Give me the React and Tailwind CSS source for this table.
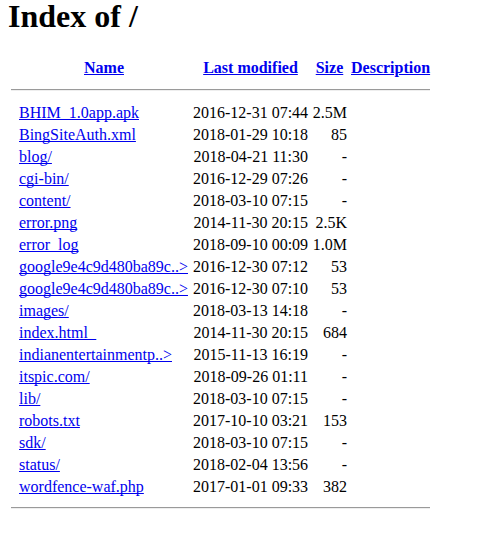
const rows = [
  ["BHIM_1.0app.apk", "2016-12-31 07:44", "2.5M"],
  ["BingSiteAuth.xml", "2018-01-29 10:18", "85"],
  ["blog/", "2018-04-21 11:30", "-"],
  ["cgi-bin/", "2016-12-29 07:26", "-"],
  ["content/", "2018-03-10 07:15", "-"],
  ["error.png", "2014-11-30 20:15", "2.5K"],
  ["error_log", "2018-09-10 00:09", "1.0M"],
  ["google9e4c9d480ba89c..>", "2016-12-30 07:12", "53"],
  ["google9e4c9d480ba89c..>", "2016-12-30 07:10", "53"],
  ["images/", "2018-03-13 14:18", "-"],
  ["index.html_", "2014-11-30 20:15", "684"],
  ["indianentertainmentp..>", "2015-11-13 16:19", "-"],
  ["itspic.com/", "2018-09-26 01:11", "-"],
  ["lib/", "2018-03-10 07:15", "-"],
  ["robots.txt", "2017-10-10 03:21", "153"],
  ["sdk/", "2018-03-10 07:15", "-"],
  ["status/", "2018-02-04 13:56", "-"],
  ["wordfence-waf.php", "2017-01-01 09:33", "382"],
];

const cols = "grid grid-cols-[4px_170px_115px_35px_79px] gap-x-[4px] leading-[18px]";

function Rule() {
  return <div className="h-[2px] border-t border-t-[#9a9a9a] border-b border-b-[#eeeeee]" />;
}

export default function App() {
  return (
    <div className="min-h-[555px] bg-white pl-[8px] text-[16px] text-black font-['Liberation_Serif','Times_New_Roman',serif]">
      <h1 className="text-[32px] font-bold leading-[32px]">Index of /</h1>

      <div className="ml-[3px] w-[419px]">
        {/* header */}
        <div className={`${cols} mt-[27px] font-bold text-center`}>
          <span />
          <a className="text-[#0000ee] underline">Name</a>
          <a className="text-[#0000ee] underline">Last modified</a>
          <a className="text-[#0000ee] underline">Size</a>
          <a className="text-[#0000ee] underline">Description</a>
        </div>

        <div className="mt-[12px]">
          <Rule />
        </div>

        {/* listing */}
        <div className="mt-[13px] flex flex-col gap-y-[4px]">
          {rows.map(([name, date, size], i) => (
            <div key={i} className={cols}>
              <span />
              <a className="whitespace-nowrap text-[#0000ee] underline [text-decoration-skip-ink:none]">{name}</a>
              <span className="whitespace-nowrap text-right">{date}</span>
              <span className="whitespace-nowrap text-right">{size}</span>
              <span />
            </div>
          ))}
        </div>

        <div className="mt-[11px]">
          <Rule />
        </div>
      </div>
    </div>
  );
}
